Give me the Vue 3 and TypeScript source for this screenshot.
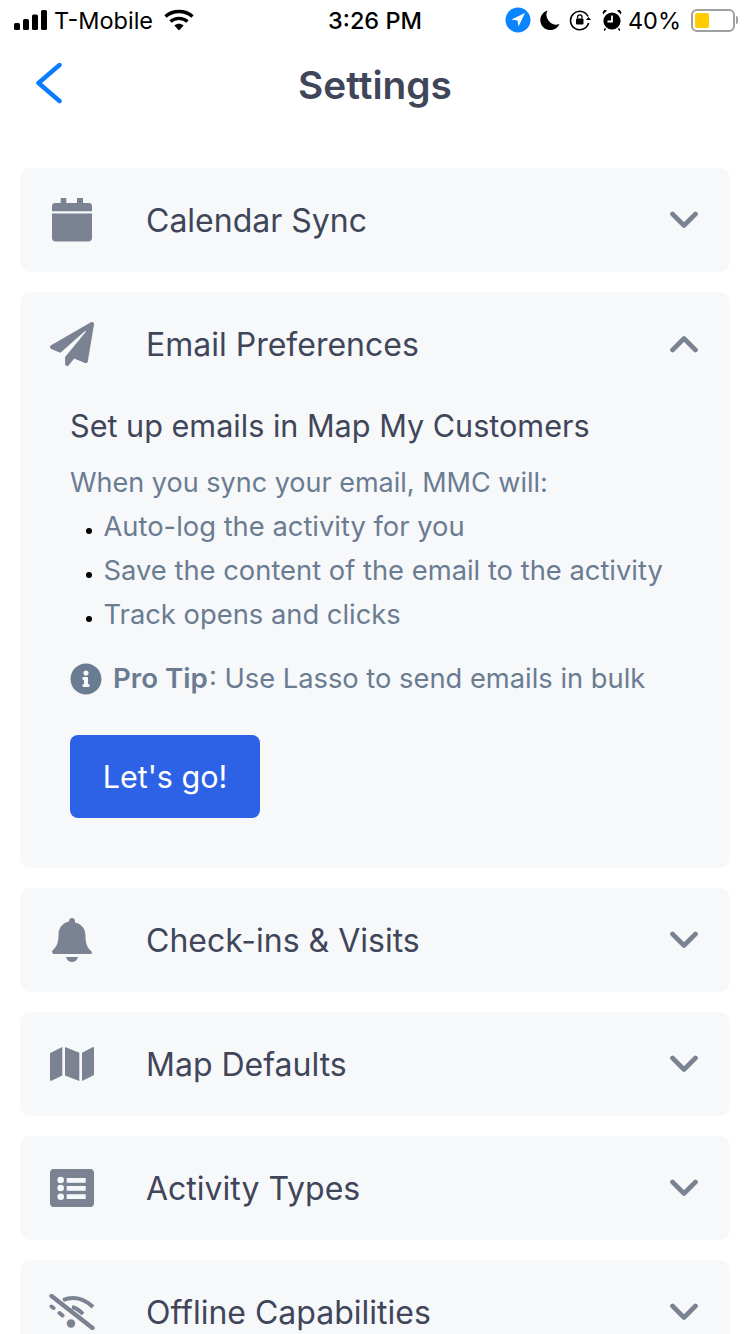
<script setup lang="ts">
interface Section {
  title: string
  viewBox: string
  width: number
  path: string
}

const calendar: Section = {
  title: 'Calendar Sync',
  viewBox: '0 0 40 44',
  width: 40,
  path: 'M8.7 0h5.6v5h10.7V0h6v5H37c1.7 0 3 1.3 3 3v5.3H0V8c0-1.7 1.3-3 3-3h5.7zM0 15.6h40V40c0 1.9-1.5 3.4-3.4 3.4H3.4C1.5 43.4 0 41.9 0 40z'
}

const planePath =
  'M476 3.2L12.5 270.6c-18.1 10.4-15.8 35.6 2.2 43.2L121 358.4l287.3-253.2c5.5-4.9 13.3 2.6 8.6 8.3L176 407v80.5c0 23.6 28.5 32.9 42.5 15.8L282 426l124.6 52.2c14.2 6 30.4-2.9 33-18.2l72-432C515 7.8 493.3-6.8 476 3.2z'

const infoPath =
  'M256 8C119.043 8 8 119.083 8 256c0 136.997 111.043 248 248 248s248-111.003 248-248C504 119.083 392.957 8 256 8zm0 110c23.196 0 42 18.804 42 42s-18.804 42-42 42-42-18.804-42-42 18.804-42 42-42zm56 254c0 6.627-5.373 12-12 12h-88c-6.627 0-12-5.373-12-12v-24c0-6.627 5.373-12 12-12h12v-64h-12c-6.627 0-12-5.373-12-12v-24c0-6.627 5.373-12 12-12h64c6.627 0 12 5.373 12 12v100h12c6.627 0 12 5.373 12 12v24z'

const sections: Section[] = [
  {
    title: 'Check-ins & Visits',
    viewBox: '0 0 40 44',
    width: 40,
    path: 'M20 0c1.7 0 3 1.3 3 3v1.6c7 1.4 10.5 7 10.5 13 0 8 1.5 11.5 5.5 15.4.8.8 1 1.2 1 1.8 0 .7-.6 1.2-1.4 1.2H1.4C.6 35 0 34.5 0 33.8c0-.6.2-1 1-1.8 4-3.9 5.5-7.4 5.5-15.4 0-6 3.5-11.6 10.5-13V3c0-1.7 1.3-3 3-3zM14 39h12c-.6 3-3 5-6 5s-5.4-2-6-5z'
  },
  {
    title: 'Map Defaults',
    viewBox: '0 0 44 34',
    width: 44,
    path: 'M0 7c0-.6.3-1 .8-1.2L12.3 0v28.6L1.5 33.8c-.7.3-1.5-.2-1.5-1zM15 0l14.3 5.7V34L15 28.6zM32 5.7L42.5.2c.7-.3 1.5.2 1.5 1v26c0 .6-.3 1-.8 1.2L32 34z'
  },
  {
    title: 'Activity Types',
    viewBox: '0 0 44 38',
    width: 44,
    path: 'M3.5 0h37C42.4 0 44 1.6 44 3.5v31c0 1.9-1.6 3.5-3.5 3.5h-37C1.6 38 0 36.4 0 34.5v-31C0 1.6 1.6 0 3.5 0zM10.7 7.7a3.3 3.3 0 1 0 0 6.6 3.3 3.3 0 0 0 0-6.6zm0 8a3.3 3.3 0 1 0 0 6.6 3.3 3.3 0 0 0 0-6.6zm0 8.7a3.3 3.3 0 1 0 0 6.6 3.3 3.3 0 0 0 0-6.6zM16.7 9v4.7h19V9zm0 8v4.7h19V17zm0 8.3V30h19v-4.7z'
  }
]

const bullets = [
  'Auto-log the activity for you',
  'Save the content of the email to the activity',
  'Track opens and clicks'
]
</script>

<template>
  <div class="page">
    <div class="status">
      <div class="status-left">
        <svg width="33" height="20" viewBox="0 0 33 20">
          <rect x="0" y="13" width="6" height="7" rx="1.5" />
          <rect x="9" y="9" width="6" height="11" rx="1.5" />
          <rect x="18" y="4.5" width="6" height="15.5" rx="1.5" />
          <rect x="27" y="0" width="6" height="20" rx="1.5" />
        </svg>
        <span class="carrier">T-Mobile</span>
        <svg class="wifi" width="30" height="22" viewBox="0 0 30 22" fill="none" stroke="#000" stroke-width="3.4">
          <path d="M1.5 7.5C9 .8 21 .8 28.5 7.5" />
          <path d="M6.5 12.5c4.8-4.2 12.2-4.2 17 0" />
          <path d="M15 21.5l-4.6-5c2.6-2.2 6.6-2.2 9.2 0z" fill="#000" stroke="none" />
        </svg>
      </div>
      <div class="status-time">3:26 PM</div>
      <div class="status-right">
        <svg width="26" height="26" viewBox="0 0 26 26">
          <circle cx="13" cy="13" r="12.5" fill="#0a84ff" />
          <path d="M20 6L6.5 12.6l6 1 1 6z" fill="#fff" />
        </svg>
        <svg width="20" height="20" viewBox="0 0 20 20">
          <path d="M7.5.5A9.8 9.8 0 0 0 19.5 14 10 10 0 1 1 7.5.5z" />
        </svg>
        <svg width="22" height="22" viewBox="0 0 22 22" fill="none" stroke="#000" stroke-width="1.6">
          <path d="M19 7.5A9.2 9.2 0 1 0 19.6 14" />
          <path d="M17 8h5l-2.5 3z" fill="#000" stroke="none" transform="rotate(180 19.5 9.5)" />
          <rect x="7" y="9.5" width="7.5" height="6" rx="1" fill="#000" stroke="none" />
          <path d="M8.6 9.5V8a2.2 2.2 0 0 1 4.4 0v1.5" stroke-width="1.3" />
        </svg>
        <svg class="alarm" width="20" height="22" viewBox="0 0 20 22">
          <circle cx="10" cy="12" r="8.6" />
          <path d="M1 5.5L5 1.6 2.6.8.6 3zM19 5.5L15 1.6l2.4-.8 2 2.2z" />
          <path d="M3.5 19.5l-1.3 2M16.5 19.5l1.3 2" stroke="#000" stroke-width="1.4" />
          <path d="M10 6.5V12.5H5.5" fill="none" stroke="#fff" stroke-width="1.8" />
        </svg>
        <span class="percent">40%</span>
        <div class="battery">
          <div class="battery-body"><div class="battery-fill"></div></div>
          <div class="battery-cap"></div>
        </div>
      </div>
    </div>

    <header class="nav">
      <svg class="back" width="28" height="42" viewBox="0 0 28 42" fill="none">
        <path d="M24.5 3L3.5 21l21 18" stroke="#0a7cff" stroke-width="4.4" stroke-linecap="round" stroke-linejoin="round" />
      </svg>
      <h1>Settings</h1>
    </header>

    <main class="list">
      <section class="card">
        <div class="row">
          <div class="icon"><svg :width="calendar.width" :viewBox="calendar.viewBox"><path :d="calendar.path" /></svg></div>
          <span class="row-title">{{ calendar.title }}</span>
          <svg class="chevron" width="28" height="18" viewBox="0 0 28 18" fill="none"><path d="M2.5 3L14 14.5 25.5 3" /></svg>
        </div>
      </section>

      <section class="card">
        <div class="row">
          <div class="icon"><svg width="44" viewBox="0 0 512 512"><path :d="planePath" /></svg></div>
          <span class="row-title">Email Preferences</span>
          <svg class="chevron" width="28" height="18" viewBox="0 0 28 18" fill="none"><path d="M2.5 15L14 3.5 25.5 15" /></svg>
        </div>
        <div class="details">
          <h2>Set up emails in Map My Customers</h2>
          <p class="lead">When you sync your email, MMC will:</p>
          <ul>
            <li v-for="item in bullets" :key="item">{{ item }}</li>
          </ul>
          <p class="tip">
            <svg width="32" height="32" viewBox="0 0 512 512"><path :d="infoPath" /></svg>
            <span><b>Pro Tip</b>: Use Lasso to send emails in bulk</span>
          </p>
          <button class="go">Let's go!</button>
        </div>
      </section>

      <section v-for="s in sections" :key="s.title" class="card">
        <div class="row">
          <div class="icon"><svg :width="s.width" :viewBox="s.viewBox"><path :d="s.path" fill-rule="evenodd" /></svg></div>
          <span class="row-title">{{ s.title }}</span>
          <svg class="chevron" width="28" height="18" viewBox="0 0 28 18" fill="none"><path d="M2.5 3L14 14.5 25.5 3" /></svg>
        </div>
      </section>

      <section class="card">
        <div class="row">
          <div class="icon">
            <svg width="46" height="36" viewBox="0 0 46 36" fill="none" stroke="#7b8291" stroke-width="4">
              <path d="M2.5 2l41 32" stroke-width="4.4" stroke-linecap="round" />
              <path d="M14 6c10-4 21-2 30 7" />
              <path d="M23 13c4 1 8 4 11 7" />
              <path d="M2.5 12.5l2 1.5M10.5 19l3 2.5" stroke-linecap="round" />
              <circle cx="22" cy="29.5" r="4.2" fill="#7b8291" stroke="none" />
            </svg>
          </div>
          <span class="row-title">Offline Capabilities</span>
          <svg class="chevron" width="28" height="18" viewBox="0 0 28 18" fill="none"><path d="M2.5 3L14 14.5 25.5 3" /></svg>
        </div>
      </section>
    </main>
  </div>
</template>

<style>
html,
body {
  margin: 0;
  background: #fff;
}
</style>

<style scoped>
.page {
  width: 750px;
  height: 1334px;
  overflow: hidden;
  background: #fff;
  font-family: Inter, "Liberation Sans", sans-serif;
}

.status {
  height: 40px;
  display: grid;
  grid-template-columns: 1fr auto 1fr;
  align-items: center;
  padding: 0 12px;
  color: #000;
  font-size: 24px;
}

.status-left,
.status-right {
  display: flex;
  align-items: center;
}

.status-left {
  gap: 7px;
  margin-left: 2px;
}

.carrier {
  font-size: 23.5px;
}

.wifi {
  margin-left: 4px;
}

.status-time {
  font-weight: 500;
  font-size: 23.5px;
}

.status-right {
  justify-content: flex-end;
  gap: 9px;
}

.alarm {
  margin-left: 2px;
}

.percent {
  font-size: 23.5px;
  margin-left: -3px;
}

.battery {
  display: flex;
  align-items: center;
  margin-left: 1px;
}

.battery-body {
  width: 44px;
  height: 23px;
  border: 2px solid #a0a0a0;
  border-radius: 6px;
  padding: 2px;
  box-sizing: border-box;
}

.battery-fill {
  width: 14px;
  height: 15px;
  background: #ffcc00;
  border-radius: 2px;
}

.battery-cap {
  width: 2px;
  height: 8px;
  margin-left: 1px;
  background: #a0a0a0;
  border-radius: 0 2px 2px 0;
}

.nav {
  height: 92px;
  box-sizing: border-box;
  padding-bottom: 3px;
  position: relative;
  display: flex;
  align-items: center;
  justify-content: center;
}

.back {
  position: absolute;
  left: 35px;
  top: 22px;
}

h1 {
  margin: 0;
  font-size: 38.8px;
  font-weight: 600;
  color: #3f4659;
}

.list {
  padding: 36px 20px 0;
  display: flex;
  flex-direction: column;
  gap: 20px;
}

.card {
  background: #f7f8fa;
  border-radius: 10px;
}

.row {
  height: 104px;
  display: flex;
  align-items: center;
  padding: 0 32px 0 30px;
}

.icon {
  width: 44px;
  display: flex;
  justify-content: center;
  align-items: center;
  fill: #7b8291;
  margin-right: 52px;
}

.icon svg {
  display: block;
  flex: none;
}

.row-title {
  flex: 1;
  font-size: 32px;
  color: #3f4659;
}

.chevron path {
  stroke: #7b8291;
  stroke-width: 4.6;
  stroke-linecap: round;
  stroke-linejoin: round;
}

.details {
  padding: 0 50px 50px;
  margin-top: 8px;
}

h2 {
  margin: 0 0 13px;
  font-size: 30.6px;
  line-height: 44px;
  font-weight: 400;
  color: #3f4659;
}

.lead {
  margin: 0;
  font-size: 27px;
  line-height: 44px;
  color: #6a7c92;
}

ul {
  margin: 0;
  padding: 0 0 0 33.5px;
  font-size: 27.35px;
  line-height: 44px;
  color: #6a7c92;
}

li::marker {
  color: #000;
  font-size: 18px;
}

.tip {
  margin: 20px 0 0;
  display: flex;
  align-items: center;
  gap: 11px;
  font-size: 27.3px;
  line-height: 44px;
  color: #6a7c92;
  fill: #6a7c92;
}

.tip b {
  font-size: 27.7px;
  line-height: 1;
  font-weight: 600;
  margin-right: 1px;
}

.go {
  display: block;
  margin-top: 34px;
  width: 190px;
  height: 83px;
  border: none;
  border-radius: 8px;
  background: #2d62e6;
  color: #fff;
  font-family: inherit;
  font-size: 30.5px;
  font-weight: 400;
}
</style>
